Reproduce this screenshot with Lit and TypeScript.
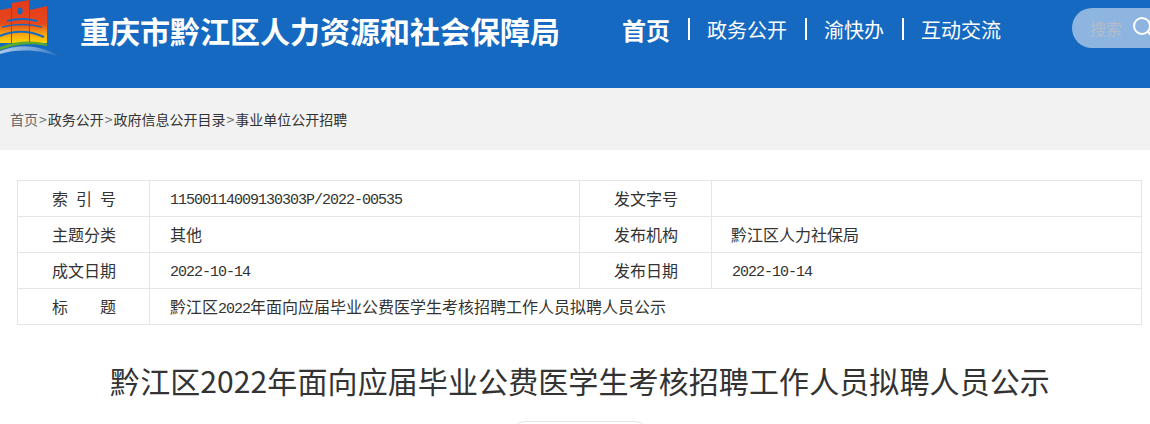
import { LitElement, html, css, svg } from "lit";
import { customElement } from "lit/decorators.js";

const logo = svg`<svg class="logo" width="64" height="62" viewBox="0 0 64 62" aria-hidden="true">
  <defs>
    <linearGradient id="g" gradientUnits="userSpaceOnUse" x1="0" y1="0" x2="0" y2="43">
      <stop offset="0" stop-color="#e23a1c"/><stop offset="0.55" stop-color="#e6481b"/>
      <stop offset="0.78" stop-color="#f8a00e"/><stop offset="1" stop-color="#ffd60a"/>
    </linearGradient>
    <linearGradient id="s" x1="0" y1="0" x2="1" y2="0">
      <stop offset="0" stop-color="#a9c8e8"/><stop offset="0.6" stop-color="#6f9fd6"/><stop offset="1" stop-color="#1569c0"/>
    </linearGradient>
  </defs>
  <path d="M0 10L11 8V43H0Z M12 3L29 0V43H12Z M30 10L47 6V43H30Z" fill="url(#g)"/>
  <ellipse cx="20" cy="11" rx="2.6" ry="3.4" fill="#1569c0"/>
  <g fill="none" stroke="#1569c0">
    <path d="M7 21Q22 17 37 21" stroke-width="2.2"/>
    <path d="M2 27Q22 22 42 27" stroke-width="1.6"/>
    <path d="M0 36Q22 27 44 37" stroke-width="2.2"/>
  </g>
  <path d="M0 47C16 41 32 40 47 44L47 46C32 43 16 44 0 50Z" fill="#5aa92c"/>
  <path d="M0 51C20 43 44 45 61 58C44 50 20 48 0 54Z" fill="url(#s)"/>
</svg>`;

const crumbs = ["政务公开", "政府信息公开目录", "事业单位公开招聘"];

@customElement("app-root")
export class AppRoot extends LitElement {
  static styles = css`
    :host { display: block; width: 1150px; height: 424px; overflow: hidden; background: #fff; font-family: "Noto Sans CJK SC", "Liberation Sans", sans-serif; }
    .header { height: 88px; background: #1569c0; display: flex; align-items: flex-start; color: #fff; }
    .logo { flex: none; display: block; margin-right: 16px; }
    .site { flex: none; font-size: 30px; font-weight: 700; line-height: 60px; width: 542px; white-space: nowrap; }
    .nav { display: flex; align-items: center; height: 58px; }
    .nav a { font-size: 20px; white-space: nowrap; }
    .nav a.home { font-size: 24px; font-weight: 700; }
    .sep { width: 2px; height: 22px; background: #fff; margin: 0 17px 0 18px; }
    .search { margin-left: 71px; margin-top: 8px; width: 120px; flex: none; height: 40px; border-radius: 20px 0 0 20px; background: #8db5e0; display: flex; align-items: center; padding-left: 18px; box-sizing: border-box; gap: 10px; color: #b3bdc9; font-size: 16px; }
    .crumbs { height: 62px; background: #f2f2f2; display: flex; align-items: center; padding-left: 10px; font-size: 14px; color: #333; white-space: nowrap; }
    .crumbs .first, .crumbs .gt { color: #666; }
    .crumbs .gt { margin: 0 1px; }
    .meta { margin: 30px 0 0 17px; width: 1125px; border: 1px solid #e5e5e5; border-bottom: 0; box-sizing: border-box; font-size: 16px; color: #333; }
    .row { display: grid; grid-template-columns: 132px 430px 132px 1fr; height: 36px; border-bottom: 1px solid #e5e5e5; box-sizing: border-box; align-items: stretch; }
    .row.full { grid-template-columns: 132px 1fr; }
    .cell { display: flex; align-items: center; padding-left: 20px; padding-bottom: 2px; box-sizing: border-box; border-right: 1px solid #e5e5e5; white-space: nowrap; }
    .cell.wide { padding-left: 19px; }
    .cell.date { padding-bottom: 0; padding-top: 4px; }
    .cell:last-child { border-right: 0; }
    .label { padding-left: 34px; }
    .spread { width: 64px; display: flex; justify-content: space-between; }
    .mono { font-family: "Liberation Mono", "Noto Sans CJK SC", monospace; font-size: 15px; letter-spacing: -1px; }
    h1 { margin: 33px 0 0 10px; font-size: 30px; line-height: 44px; font-weight: 400; color: #333; text-align: center; white-space: nowrap; letter-spacing: 0.1px; }
    .pill { margin: 19px 0 0 510px; width: 140px; height: 30px; border: 1px solid #e5e5e5; border-radius: 15px; box-sizing: border-box; }
  `;

  render() {
    return html`
      <div class="header">
        ${logo}
        <div class="site">重庆市黔江区人力资源和社会保障局</div>
        <div class="nav">
          <a class="home">首页</a><span class="sep"></span>
          <a>政务公开</a><span class="sep"></span>
          <a>渝快办</a><span class="sep"></span>
          <a>互动交流</a>
        </div>
        <div class="search">
          <span>搜索</span>
          <svg width="24" height="24" viewBox="0 0 24 24" fill="none" stroke="#fff" stroke-width="2"><circle cx="10" cy="10" r="8"/><path d="M16 16l6 6"/></svg>
        </div>
      </div>
      <div class="crumbs">
        <span class="first">首页</span><span class="gt">&gt;</span>${crumbs.map((c, i) => html`${i ? html`<span class="gt">&gt;</span>` : ""}<span>${c}</span>`)}
      </div>
      <div class="meta">
        <div class="row"><div class="cell label"><span class="spread"><span>索</span><span>引</span><span>号</span></span></div><div class="cell date mono">11500114009130303P/2022-00535</div><div class="cell label">发文字号</div><div class="cell"></div></div>
        <div class="row"><div class="cell label">主题分类</div><div class="cell">其他</div><div class="cell label">发布机构</div><div class="cell wide">黔江区人力社保局</div></div>
        <div class="row"><div class="cell label">成文日期</div><div class="cell date mono">2022-10-14</div><div class="cell label">发布日期</div><div class="cell date mono">2022-10-14</div></div>
        <div class="row full"><div class="cell label"><span class="spread"><span>标</span><span>题</span></span></div><div class="cell"><span>黔江区<span class="mono">2022</span>年面向应届毕业公费医学生考核招聘工作人员拟聘人员公示</span></div></div>
      </div>
      <h1>黔江区2022年面向应届毕业公费医学生考核招聘工作人员拟聘人员公示</h1>
      <div class="pill"></div>
    `;
  }
}
